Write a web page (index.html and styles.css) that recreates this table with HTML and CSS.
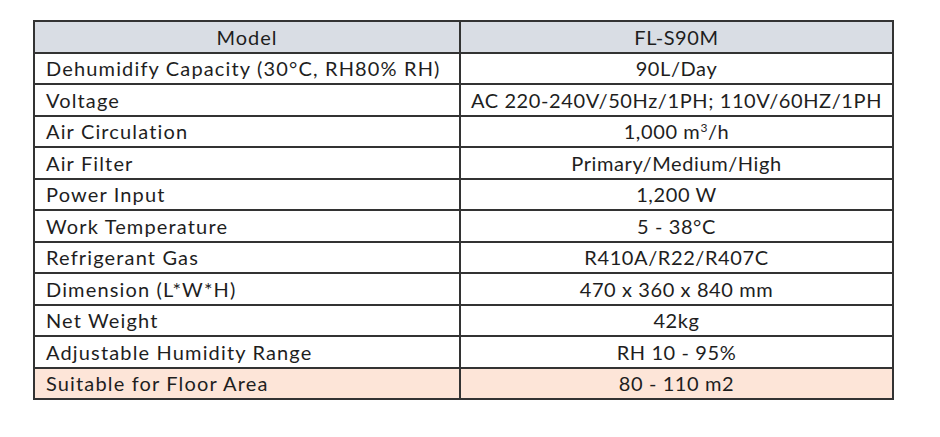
FILE: index.html
```html
<!DOCTYPE html>
<html>
<head>
<meta charset="utf-8">
<link rel="stylesheet" href="styles.css">
</head>
<body>
<table class="spec">
  <tr class="head"><th>Model</th><th>FL-S90M</th></tr>
  <tr><td>Dehumidify Capacity (30°C, RH80% RH)</td><td>90L/Day</td></tr>
  <tr><td>Voltage</td><td>AC 220-240V/50Hz/1PH; 110V/60HZ/1PH</td></tr>
  <tr><td>Air Circulation</td><td>1,000 m<sup>3</sup>/h</td></tr>
  <tr><td>Air Filter</td><td>Primary/Medium/High</td></tr>
  <tr><td>Power Input</td><td>1,200 W</td></tr>
  <tr><td>Work Temperature</td><td>5 - 38°C</td></tr>
  <tr><td>Refrigerant Gas</td><td>R410A/R22/R407C</td></tr>
  <tr><td>Dimension (L*W*H)</td><td>470 x 360 x 840 mm</td></tr>
  <tr><td>Net Weight</td><td>42kg</td></tr>
  <tr><td>Adjustable Humidity Range</td><td>RH 10 - 95%</td></tr>
  <tr class="hl"><td>Suitable for Floor Area</td><td>80 - 110 m2</td></tr>
</table>
</body>
</html>
```
FILE: styles.css
```css
html, body { margin: 0; padding: 0; background: #fff; }
body { padding: 20px 0 0 33px; }
.spec {
  border-collapse: collapse;
  width: 861px;
  font-family: Lato, "Open Sans", sans-serif;
  font-size: 20px;
  color: #1e1e1e;
  table-layout: fixed;
}
.spec th, .spec td {
  border: 2px solid #333;
  height: 29.5px;
  padding: 0;
  line-height: 1;
  font-weight: normal;
}
.spec th:first-child, .spec td:first-child { width: 424px; }
.spec td:first-child { text-align: left; padding-left: 11px; letter-spacing: 1.15px; }
.spec td:last-child, .spec th { text-align: center; letter-spacing: 0.6px; }
.spec th:first-child { letter-spacing: 1px; }
.spec .head th { background: #d9dde4; }
.spec .hl td { background: #fde5d8; }
.spec sup { font-size: 0.6em; line-height: 0; vertical-align: 0.55em; }
```
